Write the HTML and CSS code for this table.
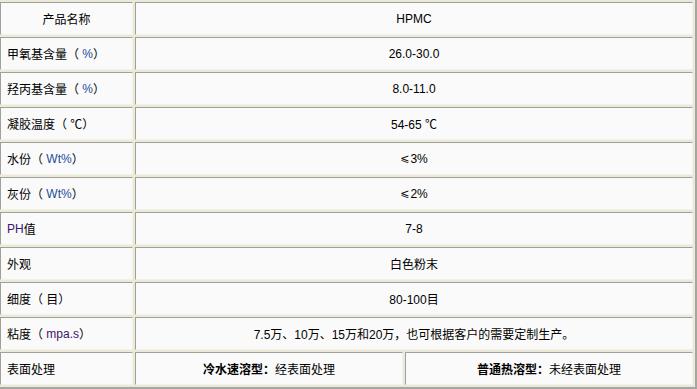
FILE: index.html
```html
<!DOCTYPE html>
<html lang="zh-CN">
<head>
<meta charset="utf-8">
<title>HPMC</title>
<link rel="stylesheet" href="styles.css">
</head>
<body>
<div class="spec">
  <div class="cell label center">产品名称</div>
  <div class="cell value wide">HPMC</div>

  <div class="cell label">甲氧基含量（ <span class="blue">%</span>）</div>
  <div class="cell value wide">26.0-30.0</div>

  <div class="cell label">羟丙基含量（ <span class="blue">%</span>）</div>
  <div class="cell value wide">8.0-11.0</div>

  <div class="cell label">凝胶温度（ ℃）</div>
  <div class="cell value wide">54-65 ℃</div>

  <div class="cell label">水份（ <span class="blue">Wt%</span>）</div>
  <div class="cell value wide"><span class="le">⩽</span>3%</div>

  <div class="cell label">灰份（ <span class="blue">Wt%</span>）</div>
  <div class="cell value wide"><span class="le">⩽</span>2%</div>

  <div class="cell label"><span class="purple">PH</span>值</div>
  <div class="cell value wide">7-8</div>

  <div class="cell label">外观</div>
  <div class="cell value wide">白色粉末</div>

  <div class="cell label">细度（ 目）</div>
  <div class="cell value wide">80-100目</div>

  <div class="cell label">粘度（ <span class="purple">mpa.s</span>）</div>
  <div class="cell value wide">7.5万、10万、15万和20万，也可根据客户的需要定制生产。</div>

  <div class="cell label">表面处理</div>
  <div class="cell value"><b>冷水速溶型：</b>经表面处理</div>
  <div class="cell value"><b>普通热溶型：</b>未经表面处理</div>
</div>
</body>
</html>
```

FILE: styles.css
```css
html, body {
  margin: 0;
  padding: 0;
  background: #ffffff;
}

.spec {
  width: 693px;
  display: grid;
  grid-template-columns: 133px 268px 288px;
  grid-auto-rows: 33px;
  gap: 2px;
  padding: 2px 2px 2px 0;
  background: #ECE9D8;
  border-right: 2px solid #A7A6A0;
  border-bottom: 2px solid #A7A6A0;
  font-family: "Liberation Sans", "Noto Sans CJK SC", sans-serif;
  font-size: 12px;
  color: #000000;
}

.cell {
  box-sizing: border-box;
  background: #FAFAFA;
  border-top: 1px solid #A0A09B;
  border-left: 1px solid #A0A09B;
  border-right: 1px solid #F3F2EA;
  border-bottom: 1px solid #F3F2EA;
  display: flex;
  align-items: center;
  white-space: pre;
}

.label {
  padding-left: 6px;
}

.label.center {
  justify-content: center;
  padding-left: 0;
}

.value {
  justify-content: center;
}

.wide {
  grid-column: span 2;
}

.le {
  font-family: "DejaVu Sans", sans-serif;
  font-size: 11px;
  margin-right: 1px;
}

.blue {
  color: #1F4C9A;
}

.purple {
  color: #3A146E;
}

b {
  font-weight: bold;
}
```
